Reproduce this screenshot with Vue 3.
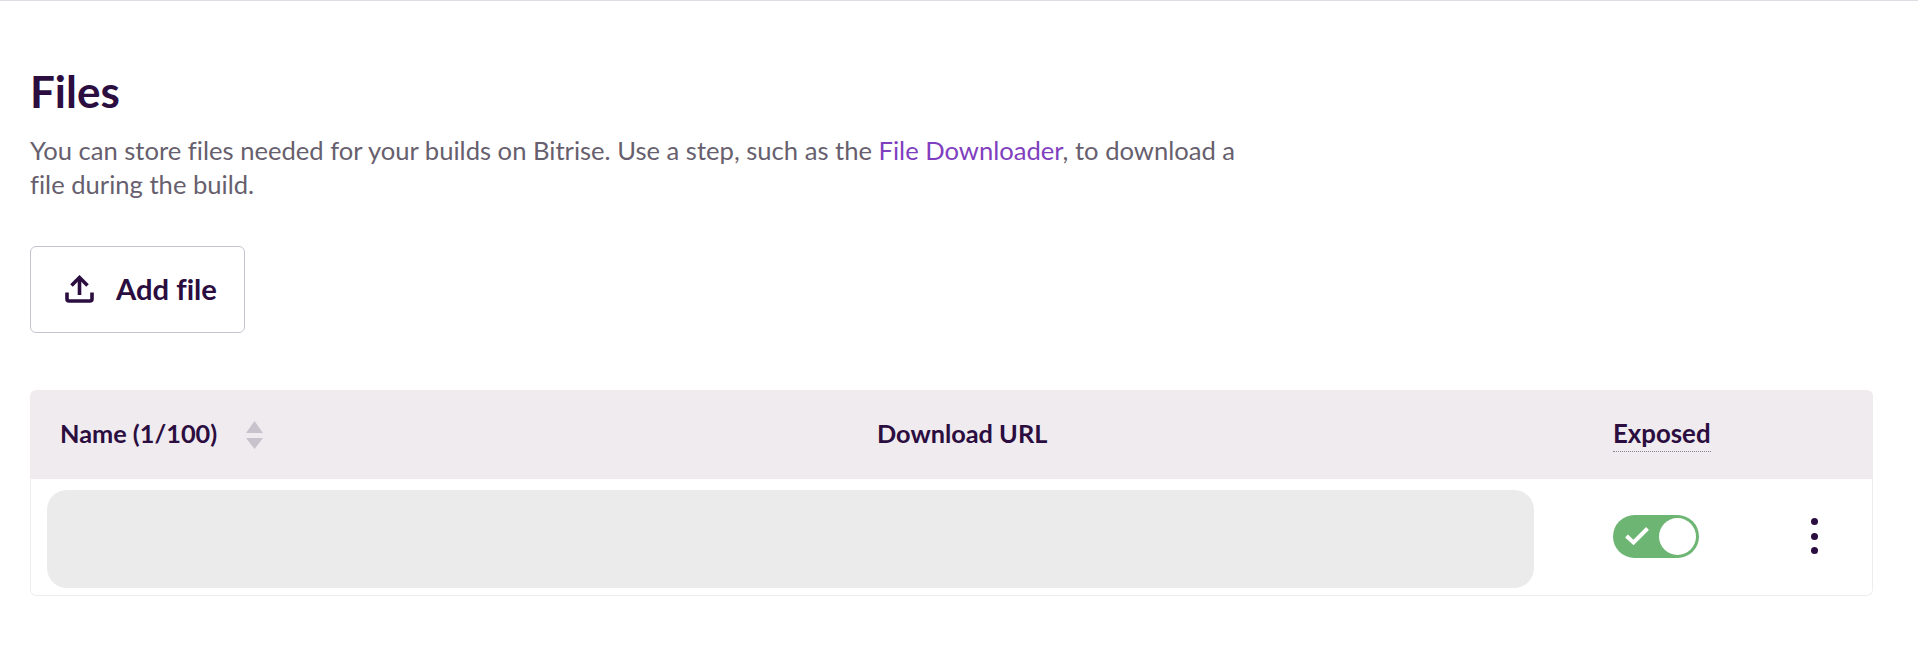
<template>
<div class="page">
  <h1 class="title">Files</h1>
  <p class="intro">
    You can store files needed for your builds on Bitrise. Use a step, such as the <a class="link">File Downloader</a>, to download a file during the build.
  </p>
  <button class="add_btn">
    <svg class="upload" viewBox="0 0 29 28" width="29" height="28" fill="none" stroke="#2b0e3f" stroke-width="3.6">
      <path d="M14.5 20V3" />
      <path d="M6.5 10.5L14.5 2.5L22.5 10.5" />
      <path d="M2 17.5V24a2 2 0 0 0 2 2H25a2 2 0 0 0 2-2V17.5" />
    </svg>
    <span>Add file</span>
  </button>
  <div class="table">
    <div class="head">
      <div class="cell name_cell">
        <span class="head_text">Name ({{ files.length }}/100)</span>
        <svg class="sort" viewBox="0 0 17 28" width="17" height="28" fill="#c8c2cd">
          <path d="M8.5 0L17 12H0Z" />
          <path d="M0 17H17L8.5 28Z" />
        </svg>
      </div>
      <div class="cell"><span class="head_text">Download URL</span></div>
      <div class="cell exposed_cell"><span class="exposed">Exposed</span></div>
    </div>
    <div v-for="file in files" :key="file.id" class="row">
      <div class="skeleton"></div>
      <div class="toggle_cell">
        <div class="toggle" :class="{ on: file.exposed }">
          <svg class="check" viewBox="0 0 24 18" width="24" height="18" fill="none" stroke="#fff" stroke-width="4">
            <path d="M1.5 9L8.5 15.5L22.5 1.5" />
          </svg>
          <div class="knob"></div>
        </div>
        <div class="more">
          <i></i><i></i><i></i>
        </div>
      </div>
    </div>
  </div>
</div>
</template>

<script setup>
import { ref } from "vue";
const files = ref([{ id: 1, exposed: true }]);
</script>

<style>
html, body {
  background: #fff;
}
</style>

<style scoped>
.page {
  box-sizing: border-box;
  height: 654px;
  padding: 66px 45px 0 30px;
  border-top: 1px solid #dfdde3;
  font-family: "Lato", "Liberation Sans", sans-serif;
  font-variant-ligatures: none;
  color: #2b0e3f;
  overflow: hidden;
}
.title {
  margin: 0;
  font-size: 44px;
  line-height: 48px;
  font-weight: 700;
}
.intro {
  margin: 18px 0 0;
  width: 1215px;
  font-size: 25.6px;
  line-height: 34px;
  color: #675f6e;
}
.link {
  color: #7f3fbf;
}
.add_btn {
  display: flex;
  align-items: center;
  gap: 22px;
  box-sizing: border-box;
  width: 215px;
  height: 87px;
  margin-top: 45px;
  padding: 0 0 2px 34px;
  background: #fff;
  border: 1px solid #c8c2cd;
  border-radius: 6px;
  font-family: inherit;
  font-variant-ligatures: none;
  font-size: 29.2px;
  font-weight: 700;
  color: #2b0e3f;
}
.table {
  margin-top: 57px;
  border-radius: 6px;
  overflow: hidden;
}
.head {
  display: grid;
  grid-template-columns: 817px 737px 1fr;
  height: 89px;
  background: #f0ebef;
  font-size: 25.3px;
  font-weight: 700;
}
.cell {
  display: flex;
  align-items: center;
  padding-left: 30px;
}
.name_cell {
  gap: 29px;
}
.head_text {
  padding-bottom: 3px;
}
.exposed_cell {
  padding-left: 29px;
}
.exposed {
  font-size: 25.8px;
  padding-bottom: 3px;
  border-bottom: 1px dotted #8b8391;
}
.row {
  display: flex;
  height: 117px;
  padding: 11px 0 0 16px;
  box-sizing: border-box;
  border: 1px solid #eeecef;
  border-top: none;
  border-radius: 0 0 6px 6px;
}
.skeleton {
  width: 1487px;
  height: 98px;
  background: #ebebeb;
  border-radius: 20px;
}
.toggle_cell {
  display: flex;
  align-items: center;
  height: 92px;
  padding-left: 79px;
}
.toggle {
  display: flex;
  align-items: center;
  justify-content: space-between;
  box-sizing: border-box;
  width: 86px;
  height: 43px;
  padding: 0 3px 0 12px;
  background: #6db573;
  border-radius: 22px;
}
.knob {
  width: 37px;
  height: 37px;
  background: #fff;
  border-radius: 50%;
}
.more {
  display: flex;
  flex-direction: column;
  gap: 7.5px;
  margin-left: 112px;
}
.more i {
  display: block;
  width: 7px;
  height: 7px;
  background: #2b0e3f;
  border-radius: 50%;
}
</style>
